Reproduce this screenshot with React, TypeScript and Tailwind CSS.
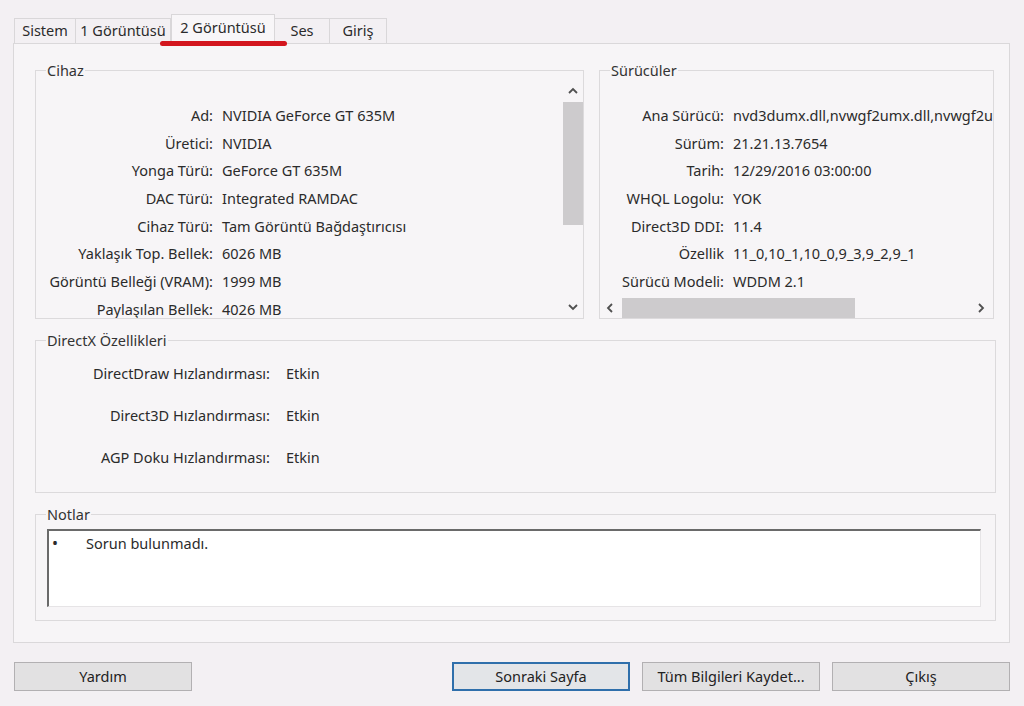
import React from 'react';

const font = { fontFamily: '"Noto Sans", "Open Sans", "DejaVu Sans", sans-serif' };

const cihaz: [string, string][] = [
  ['Ad:', 'NVIDIA GeForce GT 635M'],
  ['Üretici:', 'NVIDIA'],
  ['Yonga Türü:', 'GeForce GT 635M'],
  ['DAC Türü:', 'Integrated RAMDAC'],
  ['Cihaz Türü:', 'Tam Görüntü Bağdaştırıcısı'],
  ['Yaklaşık Top. Bellek:', '6026 MB'],
  ['Görüntü Belleği (VRAM):', '1999 MB'],
  ['Paylaşılan Bellek:', '4026 MB'],
];

const suruculer: [string, string][] = [
  ['Ana Sürücü:', 'nvd3dumx.dll,nvwgf2umx.dll,nvwgf2umx.dll,nvwgf2um'],
  ['Sürüm:', '21.21.13.7654'],
  ['Tarih:', '12/29/2016 03:00:00'],
  ['WHQL Logolu:', 'YOK'],
  ['Direct3D DDI:', '11.4'],
  ['Özellik', '11_0,10_1,10_0,9_3,9_2,9_1'],
  ['Sürücü Modeli:', 'WDDM 2.1'],
];

const directx: [string, string][] = [
  ['DirectDraw Hızlandırması:', 'Etkin'],
  ['Direct3D Hızlandırması:', 'Etkin'],
  ['AGP Doku Hızlandırması:', 'Etkin'],
];

const tabs = [
  { name: 'Sistem', w: 'w-[62px]' },
  { name: '1 Görüntüsü', w: 'w-[96px]' },
  { name: '2 Görüntüsü', w: 'w-[104px]', active: true },
  { name: 'Ses', w: 'w-[56px]' },
  { name: 'Giriş', w: 'w-[58px]' },
];

const Chevron = ({ dir }: { dir: 'up' | 'down' | 'left' | 'right' }) => {
  const pts = {
    up: '1,6 5,2 9,6',
    down: '1,2 5,6 9,2',
    left: '6,1 2,5 6,9',
    right: '3,1 7,5 3,9',
  }[dir];
  return (
    <svg width="10" height="10" viewBox="0 0 10 10">
      <polyline points={pts} fill="none" stroke="#505050" strokeWidth="1.8" />
    </svg>
  );
};

const Group = ({ title, className, children }: { title: string; className: string; children: React.ReactNode }) => (
  <fieldset className={`min-w-0 border border-[#dcdadc] ${className}`}>
    <legend className="ml-[10px] px-[1px] text-[14.5px] leading-[18px] text-[#333]">{title}</legend>
    {children}
  </fieldset>
);

const Btn = ({ label, focused }: { label: string; focused?: boolean }) => (
  <button
    className={`flex h-[29px] w-[178px] items-center justify-center text-[14.5px] text-[#222] ${
      focused ? 'border-2 border-[#2f6fab] bg-[#e3e5e8]' : 'border border-[#b2b0b2] bg-[#e2e1e2]'
    }`}
  >
    {label}
  </button>
);

export default function App() {
  return (
    <div style={font} className="relative flex h-[706px] w-[1024px] flex-col bg-[#f3f0f3] pl-[13px] pr-[14px] pt-[14px] text-[#2b2b2b]">
      <div className="ml-[2px] flex h-[29px] items-end">
        {tabs.map((t) =>
          t.active ? (
            <div
              key={t.name}
              className={`${t.w} relative z-10 -mb-px flex h-[30px] items-start justify-center border border-b-0 border-[#d9d7d9] bg-[#f8f6f8] pt-[2px] text-[14.5px]`}
            >
              {t.name}
            </div>
          ) : (
            <div
              key={t.name}
              className={`${t.w} -ml-px flex h-[25px] items-center justify-center border border-b-0 border-[#d9d7d9] text-[14.5px]`}
            >
              {t.name}
            </div>
          )
        )}
      </div>

      <div className="flex h-[600px] w-[997px] flex-col border border-[#dad8da] bg-[#f7f5f7] pb-[21px] pl-[21px] pr-[13px] pt-[17px]">
        <div className="flex gap-[15px]">
          <Group title="Cihaz" className="flex h-[258px] w-[549px] shrink-0 flex-col">
            <div className="flex min-h-0 flex-1">
              <div className="min-w-0 flex-1 overflow-hidden pt-[23px] text-[14.5px]">
                {cihaz.map(([k, v]) => (
                  <div key={k} className="flex h-[27.7px] items-center">
                    <span className="w-[177px] shrink-0 text-right">{k}</span>
                    <span className="whitespace-nowrap pl-[9px]">{v}</span>
                  </div>
                ))}
              </div>
              <div className="flex w-[21px] flex-col items-center">
                <div className="flex h-[23px] items-center pt-[2px]">
                  <Chevron dir="up" />
                </div>
                <div className="h-[123px] w-[20px] bg-[#cdcbcd]" />
                <div className="flex-1" />
                <div className="flex h-[21px] items-center">
                  <Chevron dir="down" />
                </div>
              </div>
            </div>
          </Group>

          <Group title="Sürücüler" className="mr-[2px] flex h-[258px] flex-1 flex-col">
            <div className="min-h-0 flex-1 overflow-hidden pt-[23px] text-[14.5px]">
              {suruculer.map(([k, v]) => (
                <div key={k} className="flex h-[27.7px] items-center">
                  <span className="w-[124px] shrink-0 text-right">{k}</span>
                  <span className="whitespace-nowrap pl-[9px]">{v}</span>
                </div>
              ))}
            </div>
            <div className="flex h-[21px] items-center">
              <div className="flex w-[22px] justify-center">
                <Chevron dir="left" />
              </div>
              <div className="h-[20px] w-[233px] bg-[#cdcbcd]" />
              <div className="flex-1" />
              <div className="flex w-[24px] justify-center">
                <Chevron dir="right" />
              </div>
            </div>
          </Group>
        </div>

        <Group title="DirectX Özellikleri" className="mt-[12px] h-[164px] pt-[4px]">
          {directx.map(([k, v]) => (
            <div key={k} className="flex h-[42px] items-center text-[14.5px]">
              <span className="w-[234px] shrink-0 text-right">{k}</span>
              <span className="pl-[16px]">{v}</span>
            </div>
          ))}
        </Group>

        <Group title="Notlar" className="mt-[12px] flex-1">
          <div className="pb-[13px] pl-[11px] pr-[14px] pt-[6px]">
            <div className="flex h-[78px] border-b border-l-2 border-r border-t-2 border-b-[#e6e4e6] border-l-[#6a6a6a] border-r-[#e6e4e6] border-t-[#6a6a6a] bg-white pl-[3px] pt-[2px] text-[14.5px]">
              <span className="w-[34px] text-[16px] leading-[20px]">•</span>
              <span className="leading-[20px]">Sorun bulunmadı.</span>
            </div>
          </div>
        </Group>
      </div>

      <div className="mt-[19px] flex items-center">
        <div className="ml-[1px]">
          <Btn label="Yardım" />
        </div>
        <div className="ml-auto flex gap-[12px]">
          <Btn label="Sonraki Sayfa" focused />
          <Btn label="Tüm Bilgileri Kaydet..." />
          <Btn label="Çıkış" />
        </div>
      </div>

      <div className="absolute left-[160px] top-[41px] z-20 h-[5px] w-[127px] rounded-full bg-[#d3161e]" />
    </div>
  );
}
